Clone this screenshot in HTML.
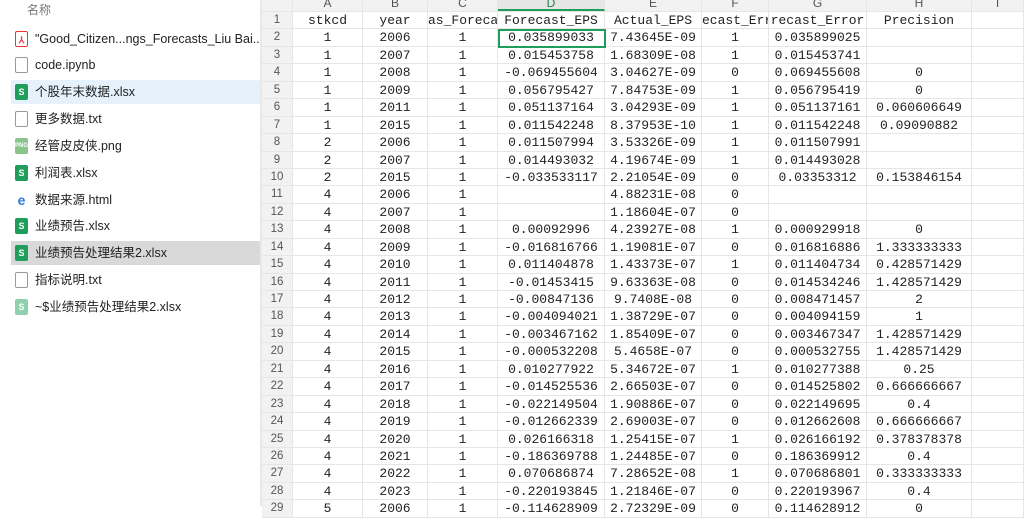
<!DOCTYPE html>
<html><head><meta charset="utf-8"><style>
*{margin:0;padding:0;box-sizing:border-box}
body{width:1024px;height:506px;overflow:hidden;background:#fff;font-family:"Liberation Sans","Noto Sans CJK SC",sans-serif;position:relative}
#side{position:absolute;left:0;top:0;width:260px;height:506px;background:#fff}
#side .hd{position:absolute;left:27px;top:1px;font-size:12px;color:#777}
.it{position:absolute;left:11px;width:249px;height:24px;font-size:12.5px;color:#222;line-height:24px;padding-left:24px;white-space:nowrap}
.it i{position:absolute;left:4px;top:4px;width:13px;height:16px;border-radius:2px;font-style:normal;font-size:9px;font-weight:bold;color:#fff;text-align:center;line-height:16px}
.xl i{background:#1f9d5a}
.tx i{background:#fff;border:1px solid #999}
.sel1{background:#e5f1fb}
.sel2{background:#d9d9d9}
#split{position:absolute;left:260px;top:0;width:2px;height:506px;background:#e8e8e8}
#grid{position:absolute;left:262px;top:-5px;width:762px;font-family:"Liberation Mono","Noto Sans CJK SC",monospace;font-size:13px;color:#222}
.r{display:flex;height:17.45px;line-height:17.45px;border-bottom:1px solid #e6e6e6}
.r div{border-right:1px solid #e6e6e6;text-align:center;white-space:nowrap;overflow:hidden;flex:none}
.r div:nth-child(1){width:31px;background:#f2f2f2;color:#555;font-family:"Liberation Sans",sans-serif;font-size:11.5px}
.r div:nth-child(2){width:70px}.r div:nth-child(3){width:65px}.r div:nth-child(4){width:70px}
.r div:nth-child(5){width:107px}.r div:nth-child(6){width:97px}.r div:nth-child(7){width:67px}
.r div:nth-child(8){width:98px}.r div:nth-child(9){width:105px}.r div:nth-child(10){width:52px}
.h{background:#f2f2f2;height:17px;line-height:17px}
.h div{color:#555;font-family:"Liberation Sans",sans-serif;font-size:12px}
.h div:nth-child(5){background:#e6e6e6;border-bottom:2px solid #1f9d5a;color:#1f7d4a}
#sel{position:absolute;left:498px;top:29px;width:108px;height:19px;border:2px solid #1f9d5a}
</style></head><body>
<div id="side">
<div class="hd">名称</div>
<div class="it" style="top:27px"><i style="background:#fff;border:1px solid #e33;color:#e33">⅄</i>"Good_Citizen...ngs_Forecasts_Liu Bai...</div>
<div class="it tx" style="top:53px"><i></i>code.ipynb</div>
<div class="it xl sel1" style="top:80px"><i>S</i>个股年末数据.xlsx</div>
<div class="it tx" style="top:107px"><i></i>更多数据.txt</div>
<div class="it" style="top:134px"><i style="background:#8bc48a;font-size:6px">PNG</i>经管皮皮侠.png</div>
<div class="it xl" style="top:161px"><i>S</i>利润表.xlsx</div>
<div class="it" style="top:188px"><i style="background:#fff;color:#2a7bd5;font-size:14px">e</i>数据来源.html</div>
<div class="it xl" style="top:214px"><i>S</i>业绩预告.xlsx</div>
<div class="it xl sel2" style="top:241px"><i>S</i>业绩预告处理结果2.xlsx</div>
<div class="it tx" style="top:268px"><i></i>指标说明.txt</div>
<div class="it xl" style="top:295px"><i style="background:#8fd0ad">S</i>~$业绩预告处理结果2.xlsx</div>
</div>
<div id="split"></div>
<div id="grid">
<div class="r h"><div></div><div>A</div><div>B</div><div>C</div><div>D</div><div>E</div><div>F</div><div>G</div><div>H</div><div>I</div></div>
<div class="r"><div>1</div><div>stkcd</div><div>year</div><div>as_Foreca</div><div>Forecast_EPS</div><div>Actual_EPS</div><div>ecast_Err</div><div>recast_Error</div><div>Precision</div><div></div></div>
<div class="r"><div>2</div><div>1</div><div>2006</div><div>1</div><div>0.035899033</div><div>7.43645E-09</div><div>1</div><div>0.035899025</div><div></div><div></div></div>
<div class="r"><div>3</div><div>1</div><div>2007</div><div>1</div><div>0.015453758</div><div>1.68309E-08</div><div>1</div><div>0.015453741</div><div></div><div></div></div>
<div class="r"><div>4</div><div>1</div><div>2008</div><div>1</div><div>-0.069455604</div><div>3.04627E-09</div><div>0</div><div>0.069455608</div><div>0</div><div></div></div>
<div class="r"><div>5</div><div>1</div><div>2009</div><div>1</div><div>0.056795427</div><div>7.84753E-09</div><div>1</div><div>0.056795419</div><div>0</div><div></div></div>
<div class="r"><div>6</div><div>1</div><div>2011</div><div>1</div><div>0.051137164</div><div>3.04293E-09</div><div>1</div><div>0.051137161</div><div>0.060606649</div><div></div></div>
<div class="r"><div>7</div><div>1</div><div>2015</div><div>1</div><div>0.011542248</div><div>8.37953E-10</div><div>1</div><div>0.011542248</div><div>0.09090882</div><div></div></div>
<div class="r"><div>8</div><div>2</div><div>2006</div><div>1</div><div>0.011507994</div><div>3.53326E-09</div><div>1</div><div>0.011507991</div><div></div><div></div></div>
<div class="r"><div>9</div><div>2</div><div>2007</div><div>1</div><div>0.014493032</div><div>4.19674E-09</div><div>1</div><div>0.014493028</div><div></div><div></div></div>
<div class="r"><div>10</div><div>2</div><div>2015</div><div>1</div><div>-0.033533117</div><div>2.21054E-09</div><div>0</div><div>0.03353312</div><div>0.153846154</div><div></div></div>
<div class="r"><div>11</div><div>4</div><div>2006</div><div>1</div><div></div><div>4.88231E-08</div><div>0</div><div></div><div></div><div></div></div>
<div class="r"><div>12</div><div>4</div><div>2007</div><div>1</div><div></div><div>1.18604E-07</div><div>0</div><div></div><div></div><div></div></div>
<div class="r"><div>13</div><div>4</div><div>2008</div><div>1</div><div>0.00092996</div><div>4.23927E-08</div><div>1</div><div>0.000929918</div><div>0</div><div></div></div>
<div class="r"><div>14</div><div>4</div><div>2009</div><div>1</div><div>-0.016816766</div><div>1.19081E-07</div><div>0</div><div>0.016816886</div><div>1.333333333</div><div></div></div>
<div class="r"><div>15</div><div>4</div><div>2010</div><div>1</div><div>0.011404878</div><div>1.43373E-07</div><div>1</div><div>0.011404734</div><div>0.428571429</div><div></div></div>
<div class="r"><div>16</div><div>4</div><div>2011</div><div>1</div><div>-0.01453415</div><div>9.63363E-08</div><div>0</div><div>0.014534246</div><div>1.428571429</div><div></div></div>
<div class="r"><div>17</div><div>4</div><div>2012</div><div>1</div><div>-0.00847136</div><div>9.7408E-08</div><div>0</div><div>0.008471457</div><div>2</div><div></div></div>
<div class="r"><div>18</div><div>4</div><div>2013</div><div>1</div><div>-0.004094021</div><div>1.38729E-07</div><div>0</div><div>0.004094159</div><div>1</div><div></div></div>
<div class="r"><div>19</div><div>4</div><div>2014</div><div>1</div><div>-0.003467162</div><div>1.85409E-07</div><div>0</div><div>0.003467347</div><div>1.428571429</div><div></div></div>
<div class="r"><div>20</div><div>4</div><div>2015</div><div>1</div><div>-0.000532208</div><div>5.4658E-07</div><div>0</div><div>0.000532755</div><div>1.428571429</div><div></div></div>
<div class="r"><div>21</div><div>4</div><div>2016</div><div>1</div><div>0.010277922</div><div>5.34672E-07</div><div>1</div><div>0.010277388</div><div>0.25</div><div></div></div>
<div class="r"><div>22</div><div>4</div><div>2017</div><div>1</div><div>-0.014525536</div><div>2.66503E-07</div><div>0</div><div>0.014525802</div><div>0.666666667</div><div></div></div>
<div class="r"><div>23</div><div>4</div><div>2018</div><div>1</div><div>-0.022149504</div><div>1.90886E-07</div><div>0</div><div>0.022149695</div><div>0.4</div><div></div></div>
<div class="r"><div>24</div><div>4</div><div>2019</div><div>1</div><div>-0.012662339</div><div>2.69003E-07</div><div>0</div><div>0.012662608</div><div>0.666666667</div><div></div></div>
<div class="r"><div>25</div><div>4</div><div>2020</div><div>1</div><div>0.026166318</div><div>1.25415E-07</div><div>1</div><div>0.026166192</div><div>0.378378378</div><div></div></div>
<div class="r"><div>26</div><div>4</div><div>2021</div><div>1</div><div>-0.186369788</div><div>1.24485E-07</div><div>0</div><div>0.186369912</div><div>0.4</div><div></div></div>
<div class="r"><div>27</div><div>4</div><div>2022</div><div>1</div><div>0.070686874</div><div>7.28652E-08</div><div>1</div><div>0.070686801</div><div>0.333333333</div><div></div></div>
<div class="r"><div>28</div><div>4</div><div>2023</div><div>1</div><div>-0.220193845</div><div>1.21846E-07</div><div>0</div><div>0.220193967</div><div>0.4</div><div></div></div>
<div class="r"><div>29</div><div>5</div><div>2006</div><div>1</div><div>-0.114628909</div><div>2.72329E-09</div><div>0</div><div>0.114628912</div><div>0</div><div></div></div>
</div>
<div id="sel"></div>
</body></html>
